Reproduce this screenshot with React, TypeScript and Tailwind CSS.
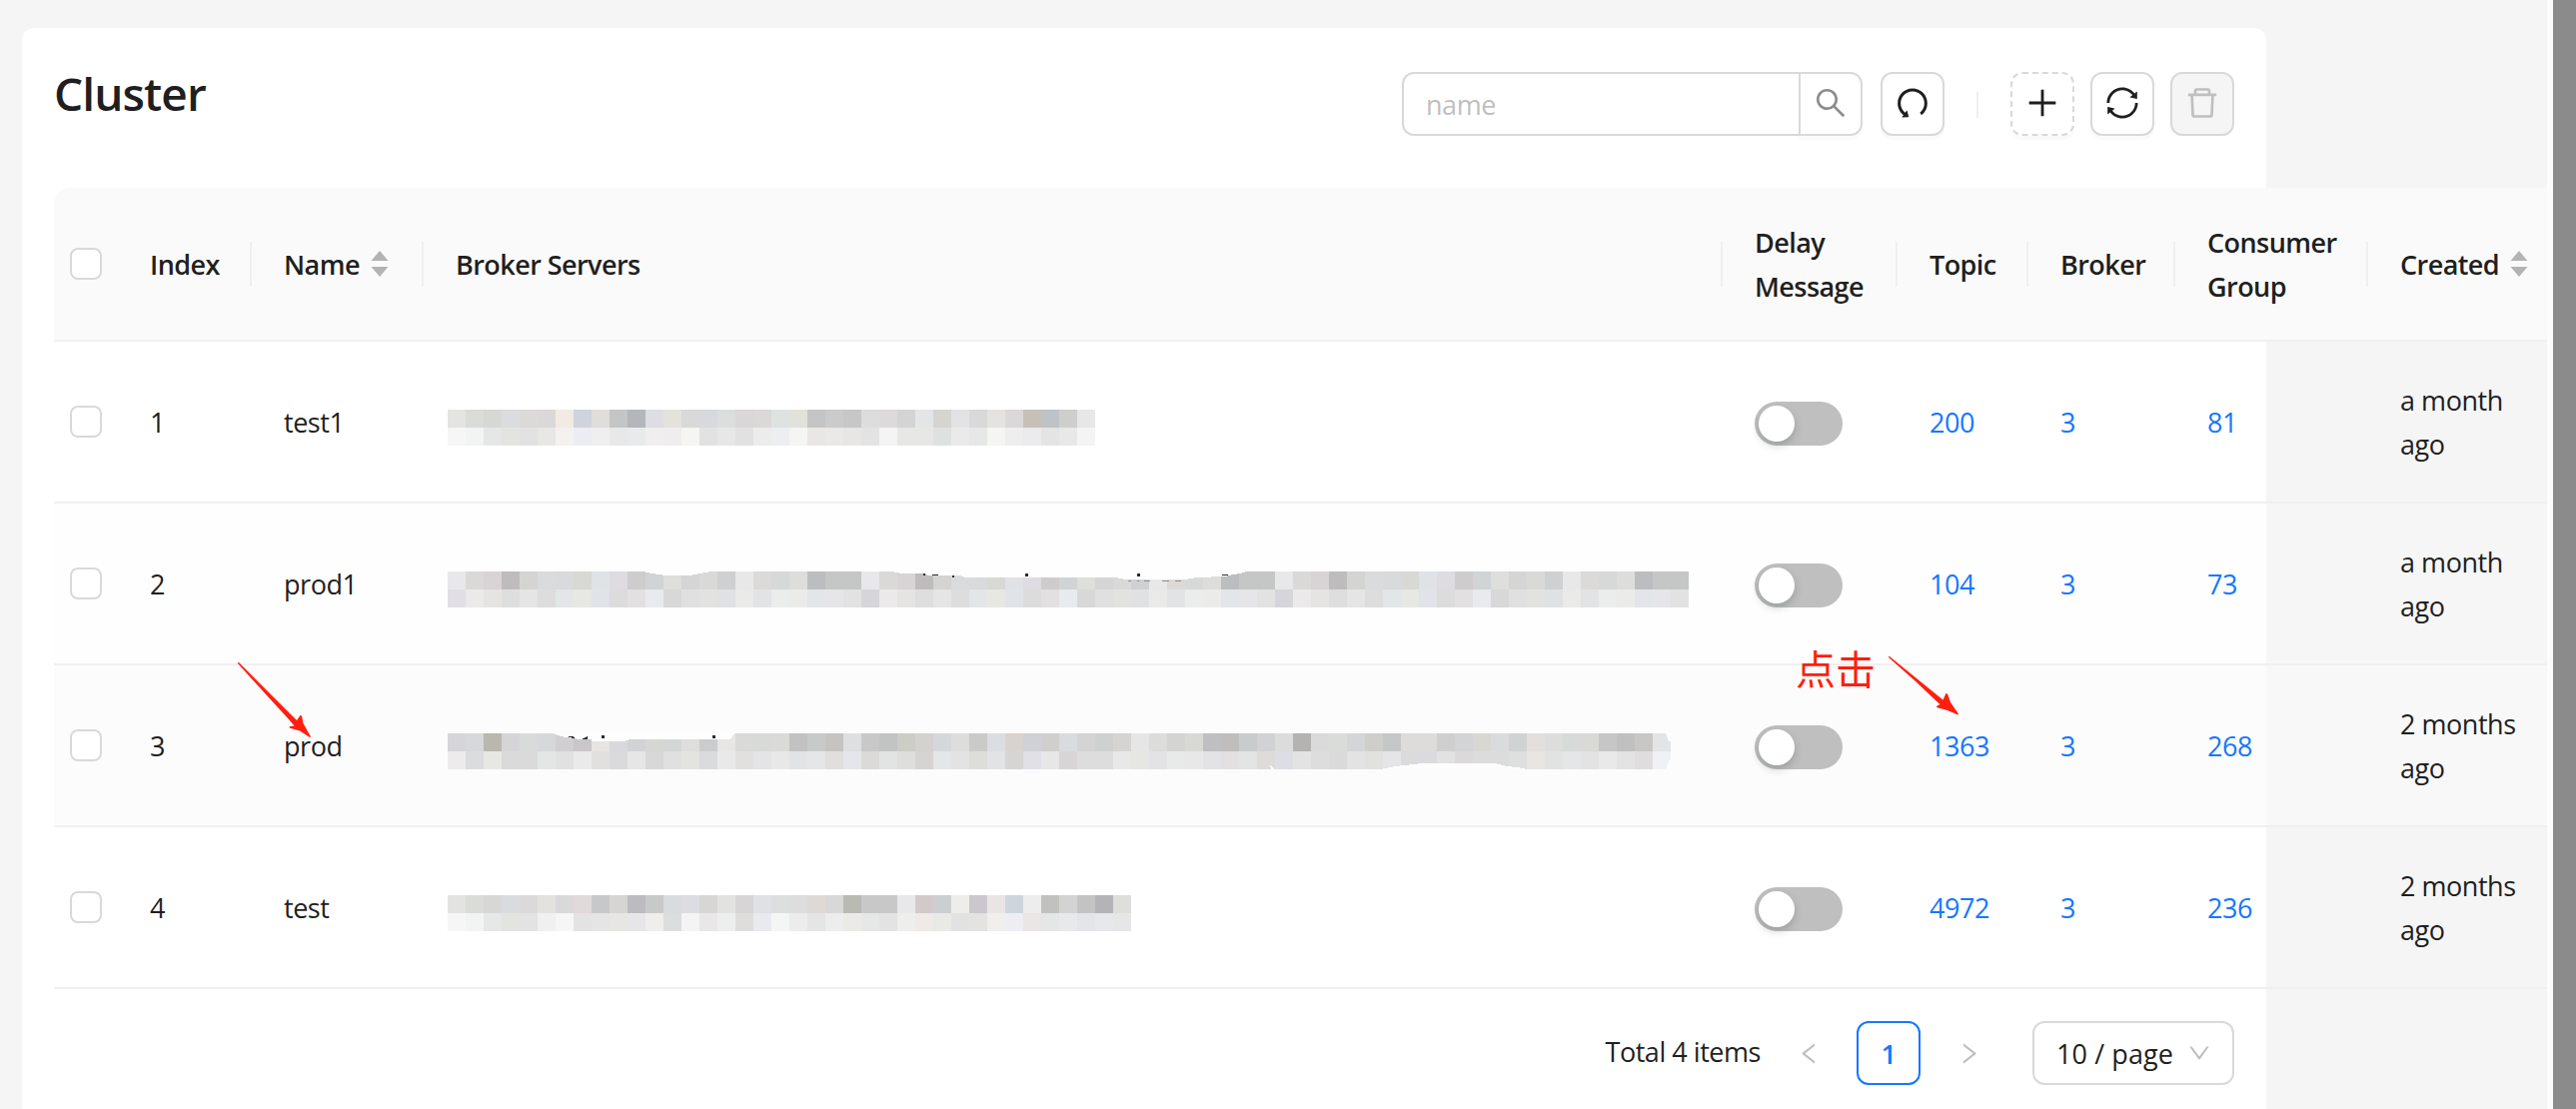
import type { ReactNode } from 'react'
import { clsx } from 'clsx'
import {
  AiOutlineDelete,
  AiOutlineDown,
  AiOutlineLeft,
  AiOutlinePlus,
  AiOutlineRight,
  AiOutlineSearch,
  AiOutlineSync,
  AiOutlineUndo,
} from 'react-icons/ai'

type Cluster = {
  index: number
  name: string
  topic: number
  broker: number
  consumer: number
  created: string
  top: string
  bottom: string
}

const CELL = 18

// the masked broker list of prod1 repeats every 23 cells
const PROD1_TOP =
  'e8e8eb dad9d7 d8d4d5 bfbcbd d4d4d3 d9dbdc d8dadb d8d8d5 dfe3e6 dedce0 cfcccd d0d4d5 dededb d5d5d5 d9d9d7 cfd0d2 e8e8e8 dcdad8 d6d9d7 dddddb bbbdbf c5c6c6 c5c6c6'
const PROD1_BOTTOM =
  'e1dfe5 ebe9e9 e5e4e2 dedede e5e5e5 dddddd e2e6e6 e7e8e4 e0e4e8 dcdcdc e3e0e1 e9eaed d8d8d8 e0e0e0 e2e2e0 e0e1e3 eaeae8 e2e3e5 ebecec ebebe9 e4e5e8 e6e6e9 e2e2e2'

const clusters: Cluster[] = [
  {
    index: 1,
    name: 'test1',
    topic: 200,
    broker: 3,
    consumer: 81,
    created: 'a month',
    top: 'e4e4e2 dadcd8 d7d7d6 dadcde dcdad8 dbd8d9 f1ebe4 cfd3dc e0deda c4c6c5 b3b7ba dddde3 e3e2dc d9d9d9 d8d9dd dcdedd dad7d8 dad9d7 dee3e2 e2e2dc c5c5c5 cbcbcb c7c7c7 dddddd dddadb d4d4d4 e4e5e7 d5d4d1 e3e3e5 d9d9d9 e4e3df dbd8da c6c0b9 bfc2c6 cecfcd e7e7e7',
    bottom:
      'f6f6f6 f2f3f3 e5e7e6 e3e3e0 e2e2e2 e8e7e4 f4f1f0 ecedf2 efefef e8e8e8 e9eaec f0eeef efedee f5f5f3 e2e2e2 e7e7e7 e1e1e1 ececec eceef1 f5f5f3 e9e7e5 ebe9e7 e8e6e5 e3e3e3 f4f4f4 e7e7e5 e7e7e5 dfe1e0 eaeaea e5e8e6 f5f5f2 eeeeee ebebed e4e4e4 e8e8e8 f4f4f4',
  },
  {
    index: 2,
    name: 'prod1',
    topic: 104,
    broker: 3,
    consumer: 73,
    created: 'a month',
    top: [PROD1_TOP, PROD1_TOP, PROD1_TOP].join(' '),
    bottom: [PROD1_BOTTOM, PROD1_BOTTOM.replace('e1dfe5', 'd6d5da'), PROD1_BOTTOM.replace('e1dfe5', 'd6d5da')].join(' '),
  },
  {
    index: 3,
    name: 'prod',
    topic: 1363,
    broker: 3,
    consumer: 268,
    created: '2 months',
    top: 'd6d6da d7d8da b8b8af d5d5d7 d9dbda d6d8da d1cfd2 cac6c9 e8e4e1 d8d8dd d2d3d5 d6d6d4 d4d6d5 dededc caccce e7e6e4 dadad8 d8dad8 dadad7 c2c2c2 c8cac9 c5c4c2 dedfe1 c8c8c9 c2c4c3 cdcdc8 d3d2cf d4d8da dddddb cacac8 dcdde1 d8d3cf d0d1d6 d0cfcd dadbdd d4d4d4 cfd1d0 d5d4d2 e6e6e6 dcdcda d4d4d2 d8d8d5 bfbfc1 bfbebc c8cccd d1d2d4 dcdcdc b4b3b2 dadada dadcda d4d5d7 cfcfc9 c6c7c9 dedcda dddcda cfcfcf d3d4d6 d8d7d2 dadbdd cfd3d4 e4dfdc dddddb d6dad8 d9d9d6 c6c6c6 c0c0c0 c8c7c5 e3e4e6',
    bottom:
      'edebeb dbdcdd e7e8e3 dadada dadada e4e6e5 e1e1e1 eaeaea e2e0df dadadc e6e6e6 d8d8d8 e0e0e0 e3e3e1 dadbdd e9e9e9 e1e0df e4e4e7 e8e8e8 e2e3e5 e5e6e8 e0dfdd e4e6e9 dbdad8 e2e4e3 dededc d5d4d2 e3e7e7 e3e3e3 dddeda e2e3e5 d6d5d3 e1e0e6 e7e7e7 d8d5d6 dddddd dddddd e8e8e8 e6e6e3 e3e3e6 e8eae9 e8e8e8 e3e2e5 e3e0e1 e2e5e3 dedcda dddee3 e3e3e3 dddddd dadada e3e3e3 e1e1df e5e4e7 dbdbdc dadadf e2e2e2 dcd9da dcdcdc dcdcdc dee0df e8e5e3 e1e3e2 e3e7e7 e3e3e3 e9e9e9 e3e3e3 e0dddf f0f1f4',
  },
  {
    index: 4,
    name: 'test',
    topic: 4972,
    broker: 3,
    consumer: 236,
    created: '2 months',
    top: 'e3e3e1 dadcd8 d7d7d6 d9dbde dbdad8 e3e2de d9d9da e0dadb c7c8ca d6d5d3 bcbcbf c8cac9 d8dcdf dcdde2 d7d6d4 e2e2e0 d7d5d6 e0e1e4 dbdfde dddddd dfd9d5 d8d8d8 b9bab4 c8c8c8 c8c8c8 e8e8eb d2caca cbcfd2 efedea cac8cc eae5e5 ced5dd ecedec c1c2be d3d3d3 c3c3c3 b4b4b7 dededa',
    bottom:
      'f6f6f6 f2f4f3 e5e8e7 e3e3e0 e3e3e4 f0f0f0 f6f6f6 e3e3e3 e5e5e5 e8e6e3 e6e6e9 f0eeea dcdddf f4f4f4 eae7e8 edefee dedddb e9eaee f4f5f5 ececec e5e5e5 ededed ebeae7 e6e8e7 e3e3e3 eeeeed efe9e8 e9e9e6 e2e2e2 e3e4e1 f1efed eceef3 e9e6e5 e4e7e6 e8e9eb e4e5e8 e7e8eb e6e6e6',
  },
]

const COLUMNS = 'grid w-[2495px] grid-cols-[64px_134px_172px_1300px_175px_131px_147px_193px_179px] items-center'

function Mosaic({ top, bottom, children }: { top: string; bottom: string; children?: ReactNode }) {
  const rows = [top.split(' '), bottom.split(' ')]
  return (
    <svg width={CELL * rows[0].length} height={CELL * 2} className="block" shapeRendering="crispEdges">
      {rows.map((cells, y) =>
        cells.map((color, x) => (
          <rect key={`${x}-${y}`} x={x * CELL} y={y * CELL} width={CELL} height={CELL} fill={`#${color}`} />
        ))
      )}
      {children}
    </svg>
  )
}

function Prod1Marks() {
  return (
    <>
      <path fill="#fefefe" d="M196 0l8 2 14 2h24l10-2 12-2zM444 0l10 2 20 0 8 2 30 0 6 2h150l10 2h60l12-2 28-1 8-2 8-1 5-2z" />
      <path
        fill="#2b2b33"
        d="M476 2h2v2h-2zM485 3h6v1h-6zM505 4h2v2h-2zM578 2h3v3h-3zM690 2h3v3h-3zM775 3h6v1h-6z"
      />
      <path fill="#8d8f96" d="M681 9h3v1h-3zM690 9h2v1h-2zM697 9h6v1h-6zM715 9h7v1h-7zM728 9h6v1h-6z" />
    </>
  )
}

function ProdMarks() {
  return (
    <>
      <path fill="#fdfdfd" d="M106 0l4 2 8 2 14 2h12v2h32l6-2h101l4-6z" />
      <path fill="#fdfdfd" d="M934 36l14-3 18-2 10-1h72l12 3 10 1 10 2zM823 32l2 2 3 2h-4zM1219 0l3 8 2 0V0zM1219 36l4-10h1v10z" />
      <path fill="#2b2b33" d="M120 4l2-1h3l2 2h-2l-2-1zM134 6l6-3v3zM154 2h3v3h-3zM265 2h3v3h-3z" />
    </>
  )
}

function Checkbox() {
  return <span className="ml-4 block size-8 rounded-lg border-2 border-[#d9d9d9] bg-white" />
}

function Switch() {
  return (
    <span className="mt-1 block h-11 w-[88px] rounded-full bg-[#bfbfbf] p-1">
      <span className="block size-9 rounded-full bg-white shadow-[0_4px_8px_rgba(0,35,11,0.2)]" />
    </span>
  )
}

function Sorter() {
  return (
    <svg width="18" height="26" viewBox="0 0 18 26" fill="#b3b3b3">
      <path d="M9 0l8.5 10H.5zM9 26L.5 16h17z" />
    </svg>
  )
}

function HeadCell({ children, last }: { children: ReactNode; last?: boolean }) {
  return (
    <div className={clsx('flex h-[45px] items-center pl-8', !last && 'border-r-2 border-[#f0f0f0]')}>{children}</div>
  )
}

function IconButton({ children, className }: { children: ReactNode; className?: string }) {
  return (
    <button
      className={clsx(
        'flex size-16 items-center justify-center rounded-xl border-2 border-[#d9d9d9] pb-0.5 text-[38px]',
        className ?? 'bg-white shadow-[0_4px_0_rgba(0,0,0,0.02)]'
      )}
    >
      {children}
    </button>
  )
}

function Toolbar() {
  return (
    <div className="flex items-center">
      <div className="flex h-16 w-[461px] rounded-xl">
        <div className="flex flex-1 items-center rounded-l-xl border-2 border-r-0 border-[#d9d9d9] pt-0.5 pl-[22px] text-[#bfbfbf]">
          name
        </div>
        <button className="flex w-16 items-center justify-center rounded-r-xl border-2 border-[#d9d9d9] pb-0.5 text-[36px] text-[#8c8c8c] shadow-[0_4px_0_rgba(0,0,0,0.02)]">
          <AiOutlineSearch />
        </button>
      </div>
      <div className="ml-[18px] flex items-center">
        <IconButton>
          <AiOutlineUndo />
        </IconButton>
        <span className="mx-8 mt-0.5 h-[26px] w-0.5 bg-[#f0f0f0]" />
        <div className="flex gap-4">
          <IconButton className="border-dashed bg-white shadow-[0_4px_0_rgba(0,0,0,0.02)]">
            <AiOutlinePlus />
          </IconButton>
          <IconButton>
            <AiOutlineSync />
          </IconButton>
          <IconButton className="bg-[#f5f5f5] text-[#bfbfbf]">
            <AiOutlineDelete />
          </IconButton>
        </div>
      </div>
    </div>
  )
}

function TableHead() {
  return (
    <div
      className={clsx(
        COLUMNS,
        'h-[154px] rounded-tl-2xl border-b-2 border-[#f0f0f0] bg-[#fafafa] font-semibold tracking-[-0.56px]'
      )}
    >
      <Checkbox />
      <HeadCell>
        <span className="pt-0.5">Index</span>
      </HeadCell>
      <HeadCell>
        <span className="pt-0.5">Name</span>
        <span className="ml-[11px]">
          <Sorter />
        </span>
      </HeadCell>
      <HeadCell>
        <span className="pt-0.5">Broker Servers</span>
      </HeadCell>
      <HeadCell>
        <span className="pt-0.5">
          Delay
          <br />
          Message
        </span>
      </HeadCell>
      <HeadCell>
        <span className="pt-0.5">Topic</span>
      </HeadCell>
      <HeadCell>
        <span className="pt-0.5">Broker</span>
      </HeadCell>
      <HeadCell>
        <span className="pt-0.5">
          Consumer
          <br />
          Group
        </span>
      </HeadCell>
      <HeadCell last>
        <span className="pt-0.5">Created</span>
        <span className="ml-[11px]">
          <Sorter />
        </span>
      </HeadCell>
    </div>
  )
}

function TableRow({ row }: { row: Cluster }) {
  return (
    <div
      className={clsx(
        COLUMNS,
        'h-[162px] border-b-2 border-[#f0f0f0]',
        row.index === 2 && 'bg-[#fafafa]/20',
        row.index === 3 && 'bg-[#fafafa]/60'
      )}
    >
      <Checkbox />
      <div className="pt-0.5 pl-8">{row.index}</div>
      <div className="pt-0.5 pl-8">{row.name}</div>
      <div className="pt-3 pl-6">
        <Mosaic top={row.top} bottom={row.bottom}>
          {row.index === 2 && <Prod1Marks />}
          {row.index === 3 && <ProdMarks />}
        </Mosaic>
      </div>
      <div className="pl-8">
        <Switch />
      </div>
      <a className="pt-0.5 pl-8 text-[#1677ff]">{row.topic}</a>
      <a className="pt-0.5 pl-8 text-[#1677ff]">{row.broker}</a>
      <a className="pt-0.5 pl-8 text-[#1677ff]">{row.consumer}</a>
      <div className="pt-0.5 pl-8 whitespace-nowrap">
        {row.created}
        <br />
        ago
      </div>
    </div>
  )
}

function Pagination() {
  return (
    <div className="mt-8 mr-8 flex h-16 items-center justify-end">
      <span className="pb-0.5">Total 4 items</span>
      <span className="ml-4 flex w-16 justify-center text-[27px] text-[#bfbfbf]">
        <AiOutlineLeft />
      </span>
      <span className="ml-4 flex size-16 items-center justify-center rounded-xl border-2 border-[#1677ff] bg-white pt-0.5 font-semibold text-[#1677ff]">
        1
      </span>
      <span className="ml-4 flex w-16 justify-center text-[27px] text-[#bfbfbf]">
        <AiOutlineRight />
      </span>
      <span className="ml-8 flex h-16 w-[202px] items-center justify-between rounded-xl border-2 border-[#d9d9d9] bg-white pr-5 pl-[22px]">
        <span className="pt-0.5 tracking-[0.1px]">10 / page</span>
        <AiOutlineDown className="text-[26px] text-[#bfbfbf]" />
      </span>
    </div>
  )
}

function Annotations() {
  return (
    <>
      <svg className="absolute top-[660px] left-[233px]" width="80" height="80" fill="#ff1e10">
        <path d="M4.500 3.500L6 3L64 61L67.500 56L69 56.500L70.500 64L78 77.500L77 78L67 71.500L56.500 68.500L57 67L61.500 66.500L56 60L34 36Z" />
      </svg>
      <span className="absolute top-[640px] left-[1797px] text-[40px] leading-[56px] tracking-normal text-[#ff1e10] [font-family:'Noto_Sans_CJK_SC',sans-serif]">
        点击
      </span>
      <svg className="absolute top-[654px] left-[1885px]" width="80" height="64" fill="#ff1e10">
        <path d="M4.500 3.500L6 3L59.500 46.500L62.500 40L64 40.500L67 49L75 60.500L74.500 61.500L64 57L53 54L53.500 52.500L56.500 51L50 45L31 27Z" />
      </svg>
    </>
  )
}

export default function App() {
  return (
    <div className="relative flex h-[1110px] w-[2578px] overflow-hidden bg-[#f5f5f5] text-[27px] leading-[44px] tracking-[-0.46px] text-[#1f1f1f] [font-family:'Open_Sans','Noto_Sans_CJK_SC',sans-serif]">
      <main className="w-[2549px] pt-7 pl-[22px]">
        <section className="h-full w-[2246px] rounded-t-xl bg-white pt-11 pl-8">
          <header className="mr-8 mb-[52px] flex h-16 justify-between">
            <h1 className="-mt-[3px] text-[46px] leading-[48px] font-semibold tracking-[-0.9px]">Cluster</h1>
            <Toolbar />
          </header>
          <TableHead />
          {clusters.map((row) => (
            <TableRow key={row.index} row={row} />
          ))}
          <Pagination />
        </section>
      </main>
      <div className="w-1.5 bg-[#fcfcfc]" />
      <div className="flex-1 bg-[#8b8b8b]" />
      <Annotations />
    </div>
  )
}
